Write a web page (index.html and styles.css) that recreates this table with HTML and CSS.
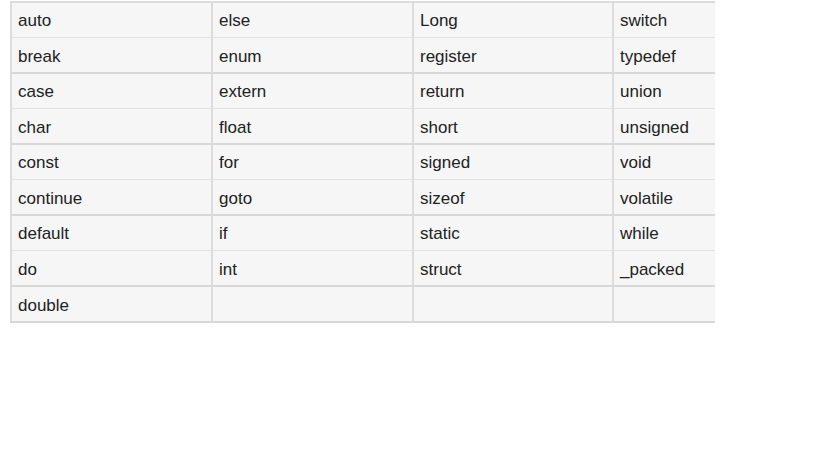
FILE: index.html
```html
<!DOCTYPE html>
<html>
<head>
<meta charset="utf-8">
<link rel="stylesheet" href="styles.css">
</head>
<body>
<div class="wrap">
<table class="kw">
<colgroup><col class="c1"><col class="c2"><col class="c3"><col class="c4"></colgroup>
<tr><td>auto</td><td>else</td><td>Long</td><td>switch</td></tr>
<tr><td>break</td><td>enum</td><td>register</td><td>typedef</td></tr>
<tr><td>case</td><td>extern</td><td>return</td><td>union</td></tr>
<tr><td>char</td><td>float</td><td>short</td><td>unsigned</td></tr>
<tr><td>const</td><td>for</td><td>signed</td><td>void</td></tr>
<tr><td>continue</td><td>goto</td><td>sizeof</td><td>volatile</td></tr>
<tr><td>default</td><td>if</td><td>static</td><td>while</td></tr>
<tr><td>do</td><td>int</td><td>struct</td><td>_packed</td></tr>
<tr><td>double</td><td></td><td></td><td></td></tr>
</table>
</div>
</body>
</html>
```
FILE: styles.css
```css
html, body {
  margin: 0;
  padding: 0;
  background: #fff;
}
.wrap {
  margin: 1px 0 0 10px;
  width: 705px;
  overflow: hidden;
}
.kw {
  border-collapse: separate;
  border-spacing: 0;
  table-layout: fixed;
  width: 803px;
  border-top: 2px solid #dcdcdc;
  font-family: "Liberation Sans", Arial, sans-serif;
  font-size: 17px;
  color: #222;
}
.kw .c1, .kw .c2, .kw .c4 { width: 201px; }
.kw .c3 { width: 200px; }
.kw td {
  box-sizing: border-box;
  height: 35px;
  padding: 2px 6px 0;
  background: #f6f6f6;
  border-left: 2px solid #dcdcdc;
  border-bottom: 1px solid #e2e2e2;
  vertical-align: middle;
  white-space: nowrap;
}
.kw tr:nth-child(even) td,
.kw tr:last-child td {
  height: 36px;
  padding-top: 3px;
  border-bottom: 2px solid #d8d8d8;
}
```
